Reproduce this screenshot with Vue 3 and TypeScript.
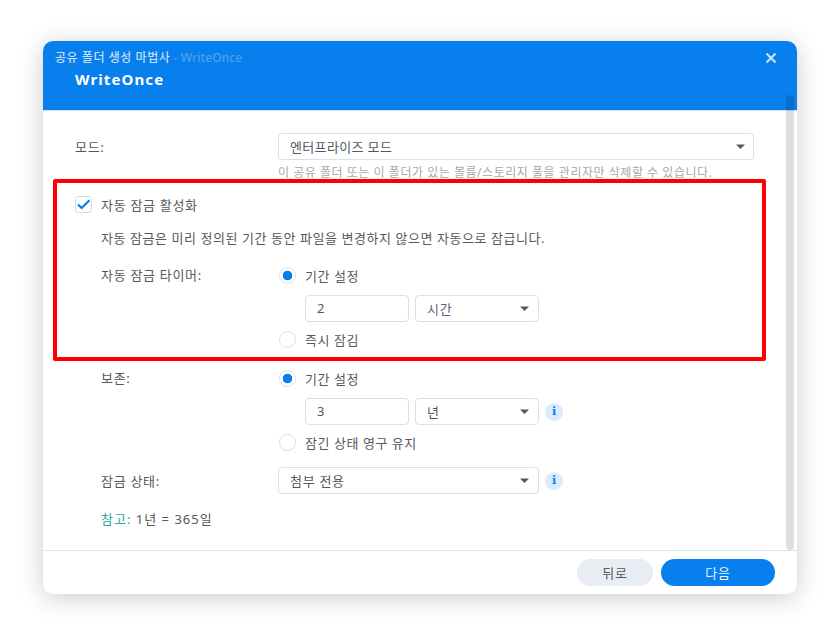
<script setup lang="ts">
const caret = 'M0 0.5h9L4.5 5z'
</script>

<template>
  <div class="page">
    <div class="dialog">
      <header class="head">
        <div class="title"><span class="t1">공유 폴더 생성 마법사</span><span class="t2"> - WriteOnce</span></div>
        <div class="sub">WriteOnce</div>
        <svg class="close" width="12" height="12" viewBox="0 0 12 12"><path d="M1.5 1.5l9 9M10.5 1.5l-9 9" stroke="#cfe4fb" stroke-width="2" fill="none"/></svg>
      </header>

      <main class="body">
        <div class="row mode">
          <div class="label">모드:</div>
          <div class="select wide"><span>엔터프라이즈 모드</span><svg width="9" height="5" viewBox="0 0 9 5"><path :d="caret" fill="#53565c"/></svg></div>
        </div>
        <div class="hint">이 공유 폴더 또는 이 폴더가 있는 볼륨/스토리지 풀을 관리자만 삭제할 수 있습니다.</div>

        <div class="check">
          <span class="box"><svg width="15" height="12" viewBox="0 0 15 12"><path d="M2 6.5l3.6 3.6L13.5 2.2" stroke="#0780ed" stroke-width="2.1" fill="none"/></svg></span>
          <span>자동 잠금 활성화</span>
        </div>
        <div class="inner">
          <div class="desc">자동 잠금은 미리 정의된 기간 동안 파일을 변경하지 않으면 자동으로 잠급니다.</div>

          <div class="row group first">
            <div class="label sub-label">자동 잠금 타이머:</div>
            <div class="opts">
              <div class="radio"><span class="dot on"></span>기간 설정</div>
              <div class="inputs">
                <div class="input">2</div>
                <div class="select small"><span class="purple">시간</span><svg width="9" height="5" viewBox="0 0 9 5"><path :d="caret" fill="#53565c"/></svg></div>
              </div>
              <div class="radio"><span class="dot"></span>즉시 잠김</div>
            </div>
          </div>

          <div class="row group second">
            <div class="label sub-label">보존:</div>
            <div class="opts">
              <div class="radio"><span class="dot on"></span>기간 설정</div>
              <div class="inputs">
                <div class="input">3</div>
                <div class="select small"><span>년</span><svg width="9" height="5" viewBox="0 0 9 5"><path :d="caret" fill="#53565c"/></svg></div>
                <span class="info">i</span>
              </div>
              <div class="radio"><span class="dot"></span>잠긴 상태 영구 유지</div>
            </div>
          </div>

          <div class="row lock">
            <div class="label sub-label">잠금 상태:</div>
            <div class="select lock-select"><span>첨부 전용</span><svg width="9" height="5" viewBox="0 0 9 5"><path :d="caret" fill="#53565c"/></svg></div>
            <span class="info">i</span>
          </div>

          <div class="note"><span class="teal">참고:</span> 1년 = 365일</div>
        </div>
      </main>

      <footer class="foot">
        <button class="btn back">뒤로</button>
        <button class="btn next">다음</button>
      </footer>

      <div class="scroll"></div>
    </div>
    <div class="redbox"></div>
  </div>
</template>

<style>
html, body { margin: 0; background: #fff; }
</style>

<style scoped>
.page {
  position: relative;
  width: 840px;
  height: 635px;
  padding: 41px 43px;
  box-sizing: border-box;
  overflow: hidden;
  font-family: "Noto Sans", "Noto Sans CJK KR", sans-serif;
  font-size: 13px;
  letter-spacing: 0.7px;
  color: #55585e;
}
.dialog {
  position: relative;
  width: 754px;
  height: 553px;
  border-radius: 10px;
  background: #fff;
  box-shadow: 0 4px 26px rgba(0, 0, 0, 0.2);
  overflow: hidden;
  display: flex;
  flex-direction: column;
}
.head {
  position: relative;
  box-sizing: border-box;
  height: 70px;
  flex: none;
  background: #0780ed;
  border-bottom: 1px solid #d5e2ef;
  padding: 9px 12px 0;
}
.title { height: 16px; line-height: 16px; font-size: 12px; font-weight: 500; letter-spacing: 0.55px; white-space: nowrap; }
.t1 { color: #c4ddf8; }
.t2 { color: #4c9ff0; letter-spacing: 0.1px; }
.sub {
  margin: 5px 0 0 20px;
  height: 16px;
  line-height: 16px;
  font-size: 15px;
  font-weight: 700;
  letter-spacing: 1.1px;
  color: #fff;
}
.close { position: absolute; right: 20px; top: 11px; }
.body { flex: 1; padding: 22px 43px 0 32px; min-height: 0; }
.row { display: flex; align-items: center; }
.label { width: 203px; flex: none; white-space: nowrap; }
.sub-label { width: 177px; }
.select {
  box-sizing: border-box;
  height: 27px;
  border: 1px solid #d7e0eb;
  border-radius: 4px;
  padding: 0 8px 0 11px;
  display: flex;
  align-items: center;
  justify-content: space-between;
  background: #fff;
}
.wide { width: 476px; letter-spacing: 0.35px; }
.small { width: 124px; padding-right: 9px; }
.lock-select { width: 261px; padding-right: 9px; }
.hint { margin: 4px 0 0 203px; height: 18px; line-height: 18px; font-size: 12px; letter-spacing: 0.53px; color: #a6a9ad; white-space: nowrap; }
.check { margin-top: 13px; height: 18px; display: flex; align-items: center; gap: 9px; }
.box {
  box-sizing: border-box;
  width: 17px;
  height: 17px;
  border: 1px solid #d2dbe6;
  border-radius: 3px;
  display: flex;
  align-items: center;
  justify-content: center;
}
.box svg { flex: none; }
.inner { padding-left: 26px; }
.desc { margin-top: 15px; height: 20px; line-height: 20px; white-space: nowrap; letter-spacing: 0.56px; }
.group { align-items: flex-start; }
.group .label { height: 18px; line-height: 18px; }
.first { margin-top: 18px; }
.second { margin-top: 21px; }
.opts { display: flex; flex-direction: column; }
.radio { height: 18px; display: flex; align-items: center; gap: 9px; margin-left: 1px; white-space: nowrap; letter-spacing: 0.55px; }
.dot {
  box-sizing: border-box;
  width: 17px;
  height: 17px;
  border: 1px solid #d7e0eb;
  border-radius: 50%;
  background: #fff;
  flex: none;
}
.dot.on { border-color: #d7e4f2; background: radial-gradient(circle, #0780ed 0 4.6px, #fff 5.1px); }
.inputs { margin: 11px 0 8px 27px; display: flex; align-items: center; gap: 6px; }
.input {
  box-sizing: border-box;
  width: 104px;
  height: 27px;
  line-height: 25px;
  border: 1px solid #d7e0eb;
  border-radius: 4px;
  padding-left: 11px;
}
.purple { color: #6f5a80; }
.info {
  width: 18px;
  height: 18px;
  border-radius: 50%;
  background: #d9ebfd;
  color: #0780ed;
  font-family: "DejaVu Serif", serif;
  font-weight: 700;
  font-size: 11px;
  letter-spacing: 0;
  line-height: 18px;
  text-align: center;
  flex: none;
}
.lock { margin-top: 16px; }
.lock .info { margin-left: 6px; }
.note { margin-top: 16px; height: 18px; line-height: 18px; letter-spacing: 1px; }
.teal { color: #28a8a0; }
.foot {
  flex: none;
  height: 44px;
  box-sizing: border-box;
  border-top: 1px solid #d9e3ee;
  display: flex;
  justify-content: flex-end;
  align-items: flex-start;
  gap: 8px;
  padding: 8px 22px 0 0;
}
.btn {
  height: 27px;
  border: 0;
  border-radius: 14px;
  font: inherit;
  letter-spacing: inherit;
  padding: 0;
}
.back { width: 76px; background: #e8edf4; color: #55585e; }
.next { width: 114px; background: #0780ed; color: #e9f3fe; }
.scroll {
  position: absolute;
  right: 3px;
  top: 54px;
  width: 8px;
  height: 455px;
  border-radius: 4px;
  background: rgba(0, 0, 0, 0.13);
}
.redbox {
  position: absolute;
  left: 53px;
  top: 179px;
  width: 713px;
  height: 182px;
  box-sizing: border-box;
  border: 4px solid #ff0000;
  border-radius: 2px;
}
</style>
